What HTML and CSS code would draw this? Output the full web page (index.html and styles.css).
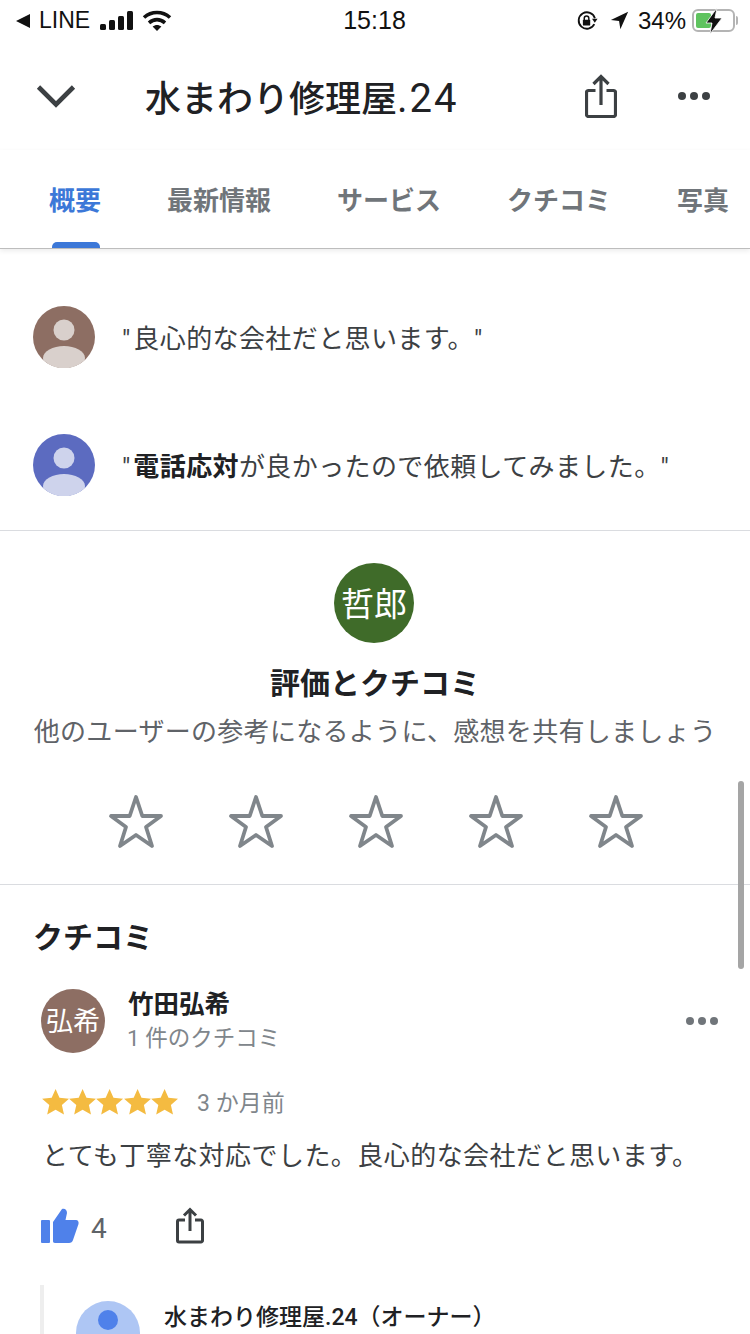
FILE: index.html
```html
<!DOCTYPE html>
<html lang="ja">

<head>
  <meta charset="UTF-8">
  <meta name="viewport" content="width=device-width, initial-scale=1.0">
  <title>水まわり修理屋.24</title>
  <link rel="stylesheet" href="styles.css">
</head>

<body>
  <div class="statusbar">
    <div class="status-left">
      <svg class="back-tri" width="16" height="16" viewBox="0 0 16 16"><path d="M15 1v14L1 8z" fill="#111" /></svg>
      <span class="carrier">LINE</span>
      <svg class="signal" width="34" height="20" viewBox="0 0 34 20">
        <rect x="0" y="13" width="6" height="6" rx="1.5" fill="#111" />
        <rect x="9" y="9" width="6" height="10" rx="1.5" fill="#111" />
        <rect x="18" y="5" width="6" height="14" rx="1.5" fill="#111" />
        <rect x="27" y="0" width="6" height="19" rx="1.5" fill="#111" />
      </svg>
      <svg class="wifi" width="30" height="22" viewBox="0 0 30 22">
        <path d="M2 7.5C9.5 .8 20.5 .8 28 7.5" fill="none" stroke="#111" stroke-width="3.6" />
        <path d="M7 12.8c4.8-4.2 11.2-4.2 16 0" fill="none" stroke="#111" stroke-width="3.6" />
        <path d="M10.6 16.6c2.7-2.3 6.1-2.3 8.8 0L15 21z" fill="#111" />
      </svg>
    </div>
    <span class="clock">15:18</span>
    <div class="status-right">
      <svg width="22" height="22" viewBox="0 0 24 24">
        <path d="M20 15.5A9 9 0 1 1 20.6 9" fill="none" stroke="#111" stroke-width="2" />
        <path d="M17.5 9.5h6L20.5 14z" fill="#111" />
        <rect x="7.5" y="10.5" width="8" height="6.5" rx="1" fill="#111" />
        <path d="M9 11V9a2.5 2.5 0 0 1 5 0v2" fill="none" stroke="#111" stroke-width="1.6" />
      </svg>
      <svg class="arrow" width="19" height="19" viewBox="0 0 22 22"><path d="M21 1 1 10.5l9.5 1.2L12 21z" fill="#111" /></svg>
      <span class="percent">34%</span>
      <div class="battery">
        <div class="battery-fill"></div>
        <svg class="bolt" width="18" height="26" viewBox="0 0 18 26"><path d="M12 0 1 15h6l-2 11L17 10h-7z" fill="#111" stroke="#fff" stroke-width=".8" /></svg>
      </div>
      <div class="battery-cap"></div>
    </div>
  </div>

  <header class="topbar">
    <svg class="chevron" width="40" height="24" viewBox="0 0 40 24"><path d="M2.500 3 20 20.500 37.500 3" fill="none" stroke="#3c4043" stroke-width="4.600" /></svg>
    <h1 class="title">水まわり修理屋<span class="title-num">.24</span></h1>
    <svg class="share-top" width="32" height="44" viewBox="0 0 32 44">
      <path d="M16 31V2.500M8.500 10 16 2.500 23.500 10" fill="none" stroke="#3c4043" stroke-width="3.200" />
      <path d="M10.500 16.500H3.500a2 2 0 0 0-2 2v22a2 2 0 0 0 2 2h25a2 2 0 0 0 2-2v-22a2 2 0 0 0-2-2h-7" fill="none" stroke="#3c4043" stroke-width="3.200" />
    </svg>
    <div class="dots dots-top"><i></i><i></i><i></i></div>
  </header>

  <nav class="tabs">
    <span class="tab active">概要</span>
    <span class="tab">最新情報</span>
    <span class="tab">サービス</span>
    <span class="tab">クチコミ</span>
    <span class="tab">写真</span>
  </nav>

  <section class="quotes">
    <div class="quote">
      <svg class="person" width="62" height="62" viewBox="0 0 62 62">
        <circle cx="31" cy="31" r="31" fill="#8d6e63" />
        <circle cx="31" cy="24" r="10.500" fill="#d9d0cc" />
        <path d="M10 52c0-7 10-12 21-12s21 5 21 12c0 .9-.2 1.800-.5 2.600a31 31 0 0 1-41 0c-.3-.8-.5-1.700-.5-2.600z" fill="#d9d0cc" />
      </svg>
      <p><span class="qm">"</span>良心的な会社だと思います。"</p>
    </div>
    <div class="quote">
      <svg class="person" width="62" height="62" viewBox="0 0 62 62">
        <circle cx="31" cy="31" r="31" fill="#5c6bc0" />
        <circle cx="31" cy="24" r="10.500" fill="#ced3ec" />
        <path d="M10 52c0-7 10-12 21-12s21 5 21 12c0 .9-.2 1.800-.5 2.600a31 31 0 0 1-41 0c-.3-.8-.5-1.700-.5-2.600z" fill="#ced3ec" />
      </svg>
      <p><span class="qm">"</span><b>電話応対</b>が良かったので依頼してみました。"</p>
    </div>
  </section>

  <section class="rate">
    <div class="rate-avatar">哲郎</div>
    <h2 class="rate-title">評価とクチコミ</h2>
    <p class="rate-sub">他のユーザーの参考になるように、感想を共有しましょう</p>
    <div class="rate-stars">
      <svg width="56" height="56" viewBox="0 0 56 56"><path d="M28 3l6.300 19H53L38 33l6 19-16-11-16 11 6-19L3 22h18.700z" fill="none" stroke="#80868b" stroke-width="3.800" stroke-linejoin="round" /></svg>
      <svg width="56" height="56" viewBox="0 0 56 56"><path d="M28 3l6.300 19H53L38 33l6 19-16-11-16 11 6-19L3 22h18.700z" fill="none" stroke="#80868b" stroke-width="3.800" stroke-linejoin="round" /></svg>
      <svg width="56" height="56" viewBox="0 0 56 56"><path d="M28 3l6.300 19H53L38 33l6 19-16-11-16 11 6-19L3 22h18.700z" fill="none" stroke="#80868b" stroke-width="3.800" stroke-linejoin="round" /></svg>
      <svg width="56" height="56" viewBox="0 0 56 56"><path d="M28 3l6.300 19H53L38 33l6 19-16-11-16 11 6-19L3 22h18.700z" fill="none" stroke="#80868b" stroke-width="3.800" stroke-linejoin="round" /></svg>
      <svg width="56" height="56" viewBox="0 0 56 56"><path d="M28 3l6.300 19H53L38 33l6 19-16-11-16 11 6-19L3 22h18.700z" fill="none" stroke="#80868b" stroke-width="3.800" stroke-linejoin="round" /></svg>
    </div>
  </section>

  <section class="reviews">
    <h2 class="reviews-title">クチコミ</h2>
    <div class="review-head">
      <div class="review-avatar">弘希</div>
      <div class="review-who">
        <div class="review-name">竹田弘希</div>
        <div class="review-count">1 件のクチコミ</div>
      </div>
      <div class="dots dots-review"><i></i><i></i><i></i></div>
    </div>
    <div class="review-meta">
      <div class="gold-stars">
        <svg width="27.200" height="26" viewBox="0 0 27 26"><path d="M13.500 0l3.900 8.800 9.600.9-7.200 6.400 2.100 9.500-8.400-4.900-8.400 4.900 2.100-9.500L0 9.700l9.600-.9z" fill="#f4bb41" /></svg>
        <svg width="27.200" height="26" viewBox="0 0 27 26"><path d="M13.500 0l3.900 8.800 9.600.9-7.200 6.400 2.100 9.500-8.400-4.900-8.400 4.900 2.100-9.500L0 9.700l9.600-.9z" fill="#f4bb41" /></svg>
        <svg width="27.200" height="26" viewBox="0 0 27 26"><path d="M13.500 0l3.900 8.800 9.600.9-7.200 6.400 2.100 9.500-8.400-4.900-8.400 4.900 2.100-9.500L0 9.700l9.600-.9z" fill="#f4bb41" /></svg>
        <svg width="27.200" height="26" viewBox="0 0 27 26"><path d="M13.500 0l3.900 8.800 9.600.9-7.200 6.400 2.100 9.500-8.400-4.900-8.400 4.900 2.100-9.500L0 9.700l9.600-.9z" fill="#f4bb41" /></svg>
        <svg width="27.200" height="26" viewBox="0 0 27 26"><path d="M13.500 0l3.900 8.800 9.600.9-7.200 6.400 2.100 9.500-8.400-4.900-8.400 4.900 2.100-9.500L0 9.700l9.600-.9z" fill="#f4bb41" /></svg>
      </div>
      <span class="review-date">3 か月前</span>
    </div>
    <p class="review-text">とても丁寧な対応でした。良心的な会社だと思います。</p>
    <div class="review-actions">
      <svg class="thumb" width="38" height="35" viewBox="0 0 38 35">
        <rect x="0" y="12" width="9" height="23" rx="1" fill="#4f81ea" />
        <path d="M12 14 21 1c3-1 5 1 5 4l-1.500 7H35c2 0 3 2 2.500 4L32 32c-.5 2-2 3-4 3H14c-1.500 0-2-1-2-2z" fill="#4f81ea" />
      </svg>
      <span class="like-count">4</span>
      <svg class="share-small" width="28" height="37" viewBox="0 0 28 37">
        <path d="M14 24V3M8 8.500l6-6 6 6" fill="none" stroke="#3c4043" stroke-width="3" />
        <path d="M9 13H3a1.500 1.500 0 0 0-1.500 1.500v19A1.500 1.500 0 0 0 3 35h22a1.500 1.500 0 0 0 1.500-1.500v-19A1.500 1.500 0 0 0 25 13h-6" fill="none" stroke="#3c4043" stroke-width="3" />
      </svg>
    </div>
    <div class="owner-reply">
      <svg class="owner-avatar" width="64" height="64" viewBox="0 0 64 64">
        <circle cx="32" cy="32" r="32" fill="#aec6f4" />
        <circle cx="32" cy="19" r="10" fill="#4f81ea" />
      </svg>
      <div class="owner-name">水まわり修理屋.24（オーナー）</div>
    </div>
  </section>

  <div class="scrollbar"></div>
</body>

</html>
```

FILE: styles.css
```css
* {
  box-sizing: border-box;
}

html,
body {
  margin: 0;
  padding: 0;
}

body {
  position: relative;
  width: 750px;
  height: 1334px;
  overflow: hidden;
  background-color: #fff;
  color: #202124;
  font-family: Roboto, "Noto Sans CJK JP", sans-serif;
}

h1,
h2,
p {
  margin: 0;
  font-weight: normal;
}

/* status bar */
.statusbar {
  display: flex;
  align-items: center;
  justify-content: space-between;
  height: 41px;
  padding: 0 12px 0 15px;
  color: #111;
  font-family: "Liberation Sans", Arial, sans-serif;
  font-size: 23px;
}

.status-left,
.status-right {
  display: flex;
  align-items: center;
  width: 300px;
}

.status-right {
  justify-content: flex-end;
}

.carrier {
  margin-left: 8px;
  margin-right: 10px;
}

.wifi {
  margin-left: 8px;
}

.clock {
  margin-right: 4px;
  font-size: 25px;
}

.arrow {
  margin-left: 12px;
}

.percent {
  margin-left: 9px;
  font-size: 24px;
}

.battery {
  position: relative;
  width: 43px;
  height: 23px;
  margin-left: 6px;
  padding: 2px;
  border: 2px solid #b4b4b4;
  border-radius: 6px;
}

.battery-fill {
  width: 15px;
  height: 100%;
  border-radius: 2px;
  background-color: #5fc35f;
}

.bolt {
  position: absolute;
  top: -3px;
  left: 11px;
}

.battery-cap {
  width: 2px;
  height: 9px;
  margin-left: 1px;
  border-radius: 0 2px 2px 0;
  background-color: #b4b4b4;
}

/* top bar */
.topbar {
  display: flex;
  align-items: center;
  height: 109px;
  padding-left: 36px;
}

.chevron {
  flex: none;
  margin-top: 1px;
}

.title {
  width: 440px;
  margin-left: 69px;
  margin-top: 1px;
  color: #202124;
  font-size: 36px;
  font-weight: 500;
  white-space: nowrap;
}

.title-num {
  font-size: 40px;
  font-weight: 400;
  letter-spacing: 2px;
}

.share-top {
  margin-top: 1px;
}

.dots {
  display: flex;
}

.dots i {
  display: block;
  border-radius: 50%;
}

.dots-top {
  gap: 4px;
  margin-left: 61px;
}

.dots-top i {
  width: 8px;
  height: 8px;
  background-color: #3c4043;
}

.dots-review {
  gap: 4px;
  margin-left: auto;
  margin-right: 32px;
}

.dots-review i {
  width: 8px;
  height: 8px;
  background-color: #70757a;
}

/* tabs */
.tabs {
  display: flex;
  gap: 66px;
  height: 99px;
  padding: 33px 0 0 49px;
  border-bottom: 1px solid #bdbdbd;
  box-shadow: 0 2px 5px rgba(0, 0, 0, 0.08);
  overflow: hidden;
  position: relative;
}

.tab {
  flex: none;
  color: #70757a;
  font-size: 26px;
  font-weight: 700;
  line-height: 36px;
}

.tab.active {
  color: #3c78d8;
}

.tab.active::after {
  content: "";
  position: absolute;
  left: 52px;
  bottom: 0;
  width: 48px;
  height: 6px;
  border-radius: 5px 5px 0 0;
  background-color: #3c78d8;
}

/* quotes */
.quotes {
  display: flex;
  flex-direction: column;
  gap: 66px;
  height: 282px;
  padding: 57px 0 0 33px;
  border-bottom: 1px solid #dadce0;
}

.quote {
  display: flex;
  align-items: center;
  gap: 27px;
  height: 62px;
  font-size: 26px;
  letter-spacing: 0.4px;
  color: #3c4043;
  white-space: nowrap;
}

.quote p {
  padding-bottom: 2px;
}

.qm {
  letter-spacing: 3px;
}

.quote b {
  color: #202124;
  font-weight: 700;
}

.person {
  flex: none;
}

/* rating prompt */
.rate {
  display: flex;
  flex-direction: column;
  align-items: center;
  height: 354px;
  padding-top: 32px;
  border-bottom: 1px solid #dadce0;
}

.rate-avatar {
  display: flex;
  align-items: center;
  justify-content: center;
  width: 80px;
  height: 80px;
  margin-left: -2px;
  padding-bottom: 3px;
  border-radius: 50%;
  background-color: #3f6b29;
  color: #fff;
  font-size: 33px;
}

.rate-title {
  margin-top: 20px;
  font-size: 30px;
  font-weight: 700;
  line-height: 42px;
  color: #202124;
}

.rate-sub {
  margin-top: 8px;
  color: #5f6368;
  font-size: 26px;
  letter-spacing: 0.3px;
  line-height: 38px;
  white-space: nowrap;
}

.rate-stars {
  display: flex;
  gap: 64px;
  margin-top: 43px;
  margin-left: 2px;
}

/* reviews */
.reviews {
  padding: 32px 0 0 33px;
}

.reviews-title {
  font-size: 30px;
  font-weight: 700;
  line-height: 42px;
  color: #202124;
}

.review-head {
  display: flex;
  align-items: center;
  margin-top: 30px;
  margin-left: 8px;
  height: 64px;
}

.review-avatar {
  display: flex;
  align-items: center;
  justify-content: center;
  flex: none;
  width: 64px;
  height: 64px;
  padding-bottom: 3px;
  border-radius: 50%;
  background-color: #8d6e63;
  color: #fff;
  font-size: 27px;
}

.review-who {
  margin-left: 23px;
}

.review-name {
  font-size: 25.500px;
  font-weight: 700;
  line-height: 34px;
  margin-top: -1px;
}

.review-count {
  margin-top: 1px;
  margin-left: -1px;
  color: #80868b;
  font-size: 22.500px;
  line-height: 32px;
}

.review-meta {
  display: flex;
  align-items: center;
  margin-top: 33px;
  margin-left: 9px;
  height: 32px;
}

.gold-stars {
  display: flex;
  width: 155px;
}

.review-date {
  margin-top: -2px;
  color: #80868b;
  font-size: 23px;
}

.review-text {
  margin-top: 19px;
  margin-left: 9px;
  color: #3c4043;
  font-size: 26px;
  letter-spacing: 0.45px;
  line-height: 38px;
  white-space: nowrap;
}

.review-actions {
  display: flex;
  align-items: center;
  height: 38px;
  margin-top: 31px;
  margin-left: 8px;
}

.like-count {
  width: 17px;
  margin-left: 12px;
  margin-top: 6px;
  color: #5f6368;
  font-size: 28px;
}

.share-small {
  margin-left: 68px;
}

.owner-reply {
  display: flex;
  align-items: flex-start;
  margin-top: 41px;
  margin-left: 7px;
  height: 60px;
  padding: 16px 0 0 32px;
  border-left: 4px solid #eee;
}

.owner-avatar {
  flex: none;
}

.owner-name {
  margin-left: 24px;
  margin-top: 1px;
  color: #202124;
  font-size: 23px;
  font-weight: 500;
  line-height: 32px;
  white-space: nowrap;
}

/* overlay scrollbar */
.scrollbar {
  position: absolute;
  top: 781px;
  left: 738px;
  width: 6px;
  height: 188px;
  border-radius: 3px;
  background-color: #a5a5a5;
}
```
